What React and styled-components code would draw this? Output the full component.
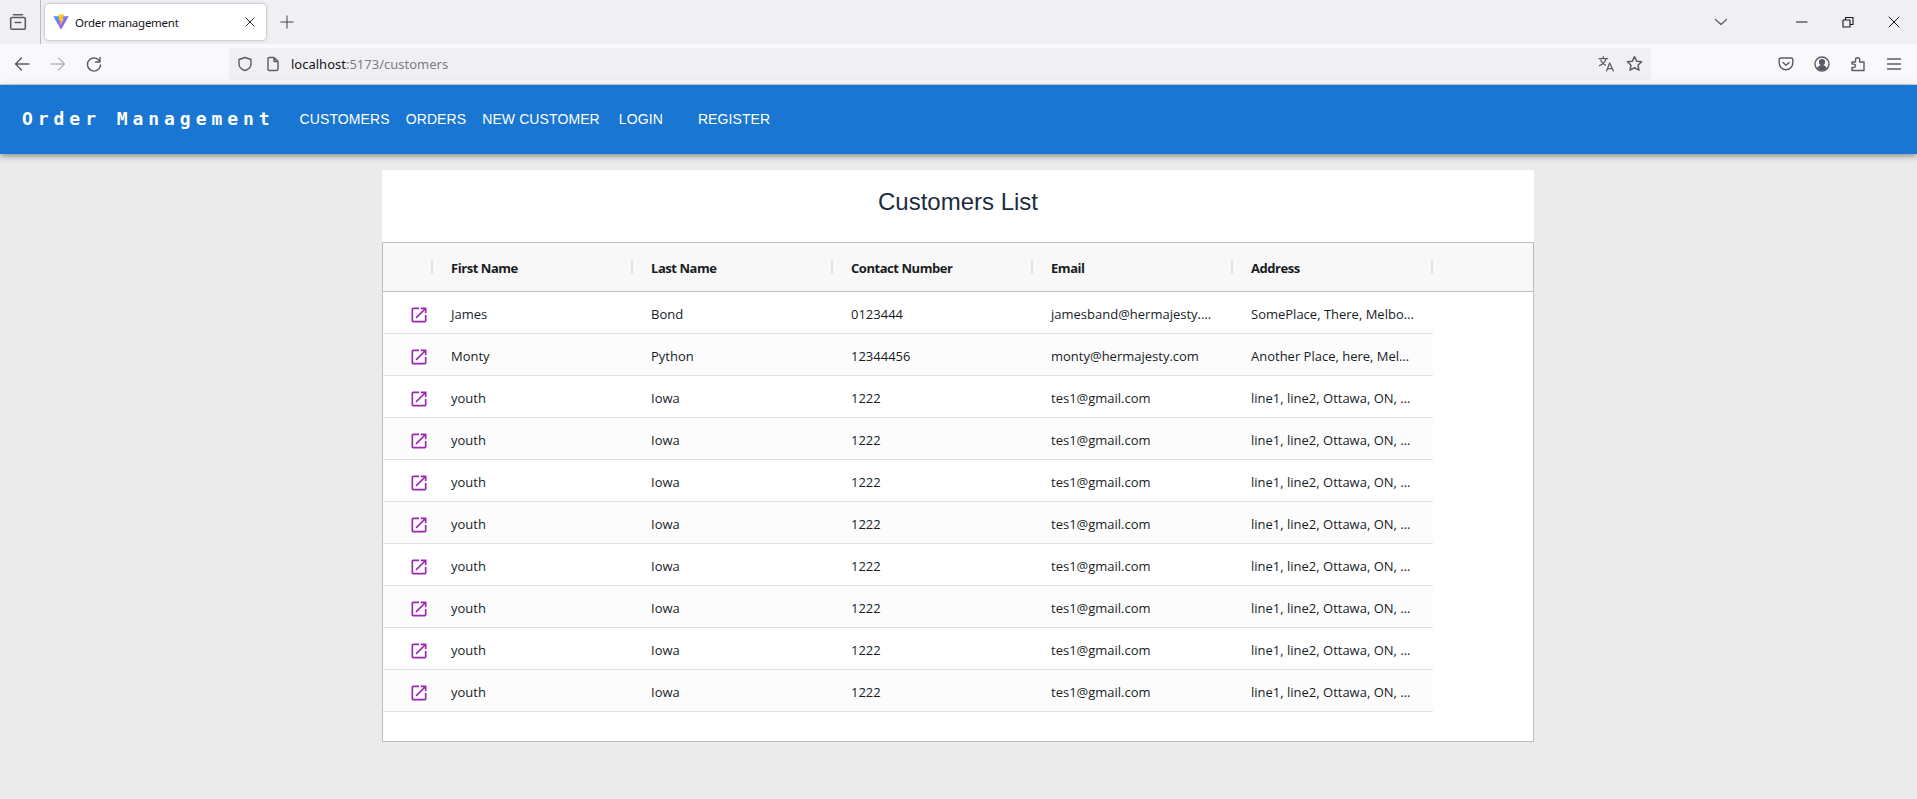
import React from 'react';
import styled, {createGlobalStyle} from 'styled-components';

const GlobalStyle = createGlobalStyle`
    html, body {
        margin: 0;
        padding: 0;
        background: #ebebeb;
    }
    * {
        box-sizing: border-box;
    }
`

const UI_FONT = `"Open Sans", "Noto Sans", sans-serif`;

const customers = [
    {first: 'James', last: 'Bond', phone: '0123444', email: 'jamesband@hermajesty.com', address: 'SomePlace, There, Melbourne, VIC, Australia'},
    {first: 'Monty', last: 'Python', phone: '12344456', email: 'monty@hermajesty.com', address: 'Another Place, here, Melbourne, VIC, Australia'},
    ...Array.from({length: 8}, () => ({
        first: 'youth',
        last: 'Iowa',
        phone: '1222',
        email: 'tes1@gmail.com',
        address: 'line1, line2, Ottawa, ON, Canada',
    })),
];

const columns = ['First Name', 'Last Name', 'Contact Number', 'Email', 'Address'];

const Icon = ({size = 16, color = '#5b5b66', width = 1.4, children}) => (
    <svg width={size} height={size} viewBox="0 0 16 16" fill="none" stroke={color} strokeWidth={width} strokeLinecap="round" strokeLinejoin="round">
        {children}
    </svg>
);

const ViteLogo = () => (
    <svg width="16" height="16" viewBox="0 0 16 16">
        <defs>
            <linearGradient id="viteBody" x1="0" y1="0" x2="1" y2="1">
                <stop offset="0" stopColor="#41a5ff"/>
                <stop offset="1" stopColor="#bd34fe"/>
            </linearGradient>
        </defs>
        <path d="M0.2 2.200 L15.800 2.200 L8 15.600 Z" fill="url(#viteBody)"/>
        <path d="M5.600 0.600 L11.200 0.600 L9.600 5 L11 5 L6.800 12 L7.600 6.800 L6 6.800 Z" fill="#ffc517"/>
    </svg>
);

const App = () => {
    return (
        <Page>
            <GlobalStyle/>
            <TabStrip>
                <TabListButton>
                    <Icon size={18}>
                        <path d="M4 1.500h8M2.800 4h10.400a1.300 1.300 0 0 1 1.300 1.300v7.900a1.300 1.300 0 0 1-1.300 1.300H2.800a1.300 1.300 0 0 1-1.300-1.300V5.300A1.300 1.300 0 0 1 2.800 4zM5.500 8.500h5"/>
                    </Icon>
                </TabListButton>
                <Tab>
                    <ViteLogo/>
                    <TabTitle>Order management</TabTitle>
                    <Icon size={12} color="#15141a" width={1.2}><path d="M2.500 2.500l11 11M13.500 2.500l-11 11"/></Icon>
                </Tab>
                <NewTab>
                    <Icon size={14} color="#3b3b44" width={1.1}><path d="M8 1v14M1 8h14"/></Icon>
                </NewTab>
                <StripSpacer/>
                <WindowButton $width={110} $shift={-3}>
                    <Icon size={16} color="#5b5b66" width={1.2}><path d="M2.500 5.500L8 10.500l5.500-5"/></Icon>
                </WindowButton>
                <WindowButton $width={46}>
                    <Icon size={16} color="#15141a" width={1.1}><path d="M2.500 8h10.500"/></Icon>
                </WindowButton>
                <WindowButton $width={46}>
                    <Icon size={16} color="#15141a" width={1.1}><path d="M3 6h7v7H3zM5.500 6V3.500h7.500v7H10"/></Icon>
                </WindowButton>
                <WindowButton $width={46}>
                    <Icon size={16} color="#15141a" width={1}><path d="M3 3l10 10M13 3L3 13"/></Icon>
                </WindowButton>
            </TabStrip>

            <Toolbar>
                <NavButtons>
                    <Icon size={16}><path d="M15 8H1.500M7.500 2L1.500 8l6 6"/></Icon>
                    <Icon size={16} color="#b6b6bc"><path d="M1 8h13.500M8.500 2l6 6-6 6"/></Icon>
                    <Icon size={16}><path d="M14 1.500v4.500H9.500M14 6A6.500 6.500 0 1 0 14.500 9"/></Icon>
                </NavButtons>
                <UrlBar>
                    <UrlIcon $width={28}>
                        <Icon size={16}><path d="M8 1.500l6 2v4.500c0 3.500-2.500 5.500-6 6.500-3.500-1-6-3-6-6.500V3.500z"/></Icon>
                    </UrlIcon>
                    <UrlIcon $width={18}>
                        <Icon size={16}><path d="M3 2.800A1.300 1.300 0 0 1 4.300 1.500H9l4 4v7.700a1.300 1.300 0 0 1-1.300 1.300H4.300A1.300 1.300 0 0 1 3 13.200zM9 1.500v4h4"/></Icon>
                    </UrlIcon>
                    <UrlText>localhost<UrlDim>:5173/customers</UrlDim></UrlText>
                    <UrlActions>
                        <Icon size={17} width={1.2}><path d="M1 3.500h8M5 1.500v2M7.500 3.500c-.5 2.500-2.500 5-6 6.500M2.500 5c1 2 2.500 3.500 4.500 4.500M8 15l3-7.500 3.500 7.500M9 12.800h4.500"/></Icon>
                        <Icon size={17}><path d="M8 1.500l2 4.300 4.700.6-3.400 3.200.9 4.700L8 12l-4.200 2.300.9-4.700L1.300 6.400 6 5.800z"/></Icon>
                    </UrlActions>
                </UrlBar>
                <ToolbarActions>
                    <Icon size={16}><path d="M2.500 2h11a1.300 1.300 0 0 1 1.300 1.300V7a6.800 6.800 0 0 1-13.600 0V3.300A1.300 1.300 0 0 1 2.500 2zM5 6.500L8 9.200l3-2.700"/></Icon>
                    <Icon size={16}>
                        <circle cx="8" cy="8" r="7"/>
                        <circle cx="8" cy="6" r="2.400" fill="#5b5b66"/>
                        <path d="M3.800 12.300c1-2 2.500-2.700 4.200-2.700s3.200.7 4.200 2.700c-2.500 1.600-5.900 1.600-8.400 0z" fill="#5b5b66"/>
                    </Icon>
                    <Icon size={16}><path d="M2 6h3.500V3.800a2.100 2.100 0 0 1 4.200 0V6H14v8.500H2v-3h1.800a1.700 1.700 0 0 0 0-3.400H2z"/></Icon>
                    <Icon size={16}><path d="M1.500 3h13M1.500 8h13M1.500 13h13"/></Icon>
                </ToolbarActions>
            </Toolbar>

            <AppBar>
                <Brand>Order Management</Brand>
                <NavLink $left={25}>CUSTOMERS</NavLink>
                <NavLink $left={16}>ORDERS</NavLink>
                <NavLink $left={16}>NEW CUSTOMER</NavLink>
                <NavLink $left={19}>LOGIN</NavLink>
                <NavLink $left={35}>REGISTER</NavLink>
            </AppBar>

            <Main>
                <Card>
                    <Title>Customers List</Title>
                    <Grid>
                        <HeaderRow>
                            <HeaderCell $action/>
                            {columns.map(cur => <HeaderCell key={cur}>{cur}</HeaderCell>)}
                        </HeaderRow>
                        {customers.map((cur, idx) => <CustomerRow key={idx} odd={idx % 2 === 1} {...cur}/>)}
                    </Grid>
                </Card>
            </Main>
        </Page>
    );
};

const CustomerRow = (props) => {
    const {first, last, phone, email, address, odd} = props;
    return (
        <Row $odd={odd}>
            <ActionCell>
                <svg width="20" height="20" viewBox="0 0 24 24" fill="#9c27b0">
                    <path d="M19 19H5V5h7V3H5c-1.110 0-2 .9-2 2v14c0 1.100.89 2 2 2h14c1.100 0 2-.9 2-2v-7h-2zM14 3v2h3.590l-9.830 9.830 1.410 1.410L19 6.410V10h2V3z"/>
                </svg>
            </ActionCell>
            <Cell>{first}</Cell>
            <Cell>{last}</Cell>
            <Cell>{phone}</Cell>
            <Cell>{email}</Cell>
            <Cell>{address}</Cell>
        </Row>
    );
};

const Page = styled.div`
    min-height: 100vh;
    display: flex;
    flex-direction: column;
    background: #ebebeb;
`
const TabStrip = styled.div`
    height: 44px;
    display: flex;
    align-items: center;
    background: #f0f0f4;
`
const TabListButton = styled.div`
    width: 41px;
    height: 44px;
    padding-right: 5px;
    display: flex;
    align-items: center;
    justify-content: center;
    border-right: 1px solid #b9b9bd;
`
const Tab = styled.div`
    margin-left: 4px;
    width: 221px;
    height: 36px;
    padding: 0 10px 0 8px;
    display: flex;
    align-items: center;
    background: #fff;
    border-radius: 4px;
    box-shadow: 0 0 3px rgba(0, 0, 0, 0.35);
`
const TabTitle = styled.span`
    margin-left: 6px;
    flex: 1;
    font: 11.500px "Noto Sans", sans-serif;
    letter-spacing: -0.25px;
    color: #15141a;
`
const NewTab = styled.div`
    margin-left: 14px;
    display: flex;
    align-items: center;
`
const StripSpacer = styled.div`
    flex: 1;
`
const WindowButton = styled.div`
    width: ${props => props.$width}px;
    padding-right: ${props => props.$shift ? -props.$shift * 2 : 0}px;
    display: flex;
    justify-content: center;
`
const Toolbar = styled.div`
    height: 41px;
    padding-bottom: 1px;
    display: flex;
    align-items: center;
    background: #f9f9fb;
    border-bottom: 1px solid #cfcfd3;
`
const NavButtons = styled.div`
    width: 229px;
    padding-left: 14px;
    display: flex;
    gap: 20px;
`
const UrlBar = styled.div`
    width: 1422px;
    height: 32px;
    padding: 0 8px;
    display: flex;
    align-items: center;
    background: #f0f0f4;
    border-radius: 4px;
`
const UrlIcon = styled.div`
    width: ${props => props.$width}px;
    display: flex;
`
const UrlText = styled.span`
    margin-left: 8px;
    flex: 1;
    font: 13px "Noto Sans", sans-serif;
    color: #15141a;
`
const UrlDim = styled.span`
    color: #7d7d85;
`
const UrlActions = styled.div`
    padding-right: 0;
    display: flex;
    gap: 11px;
`
const ToolbarActions = styled.div`
    margin-left: 127px;
    display: flex;
    gap: 20px;
`
const AppBar = styled.header`
    height: 69px;
    padding: 0 0 2px 22px;
    display: flex;
    align-items: center;
    background: #1976d2;
    color: #fff;
    box-shadow: 0 2px 4px -1px rgba(0, 0, 0, 0.2), 0 4px 5px 0 rgba(0, 0, 0, 0.14), 0 1px 10px 0 rgba(0, 0, 0, 0.12);
    position: relative;
`
const Brand = styled.div`
    font: 700 18px "DejaVu Sans Mono", monospace;
    letter-spacing: 4.950px;
`
const NavLink = styled.a`
    margin-left: ${props => props.$left}px;
    font: 14px "Liberation Sans", Arial, sans-serif;
    letter-spacing: 0.1px;
    color: #fff;
`
const Main = styled.main`
    padding: 16px 0 0 382px;
`
const Card = styled.section`
    width: 1152px;
    background: #fff;
`
const Title = styled.h2`
    margin: 0;
    height: 72px;
    padding-top: 18px;
    text-align: center;
    font: 400 24px "Liberation Sans", Arial, sans-serif;
    color: #1c2c40;
`
const Grid = styled.div`
    height: 500px;
    border: 1px solid #babfc7;
    font: 13px ${UI_FONT};
    color: #181d1f;
`
const HeaderRow = styled.div`
    height: 49px;
    display: flex;
    background: #f8f8f8;
    border-bottom: 1px solid #babfc7;
`
const HeaderCell = styled.div`
    position: relative;
    width: ${props => props.$action ? 50 : 200}px;
    padding: 2px 0 0 18px;
    display: flex;
    align-items: center;
    font-weight: 700;
    letter-spacing: -0.45px;
    &::after {
        content: '';
        position: absolute;
        right: 0;
        top: 17px;
        width: 2px;
        height: 14px;
        background: #dfe3ec;
    }
`
const Row = styled.div`
    width: 1050px;
    height: 42px;
    padding-top: 2px;
    display: flex;
    align-items: center;
    background: ${props => props.$odd ? '#fcfcfc' : '#fff'};
    border-bottom: 1px solid #dde2eb;
`
const ActionCell = styled.div`
    width: 50px;
    padding: 2px 0 0 26px;
    display: flex;
`
const Cell = styled.div`
    width: 200px;
    padding: 0 18px;
    overflow: hidden;
    white-space: nowrap;
    text-overflow: ellipsis;
`

export default App;
